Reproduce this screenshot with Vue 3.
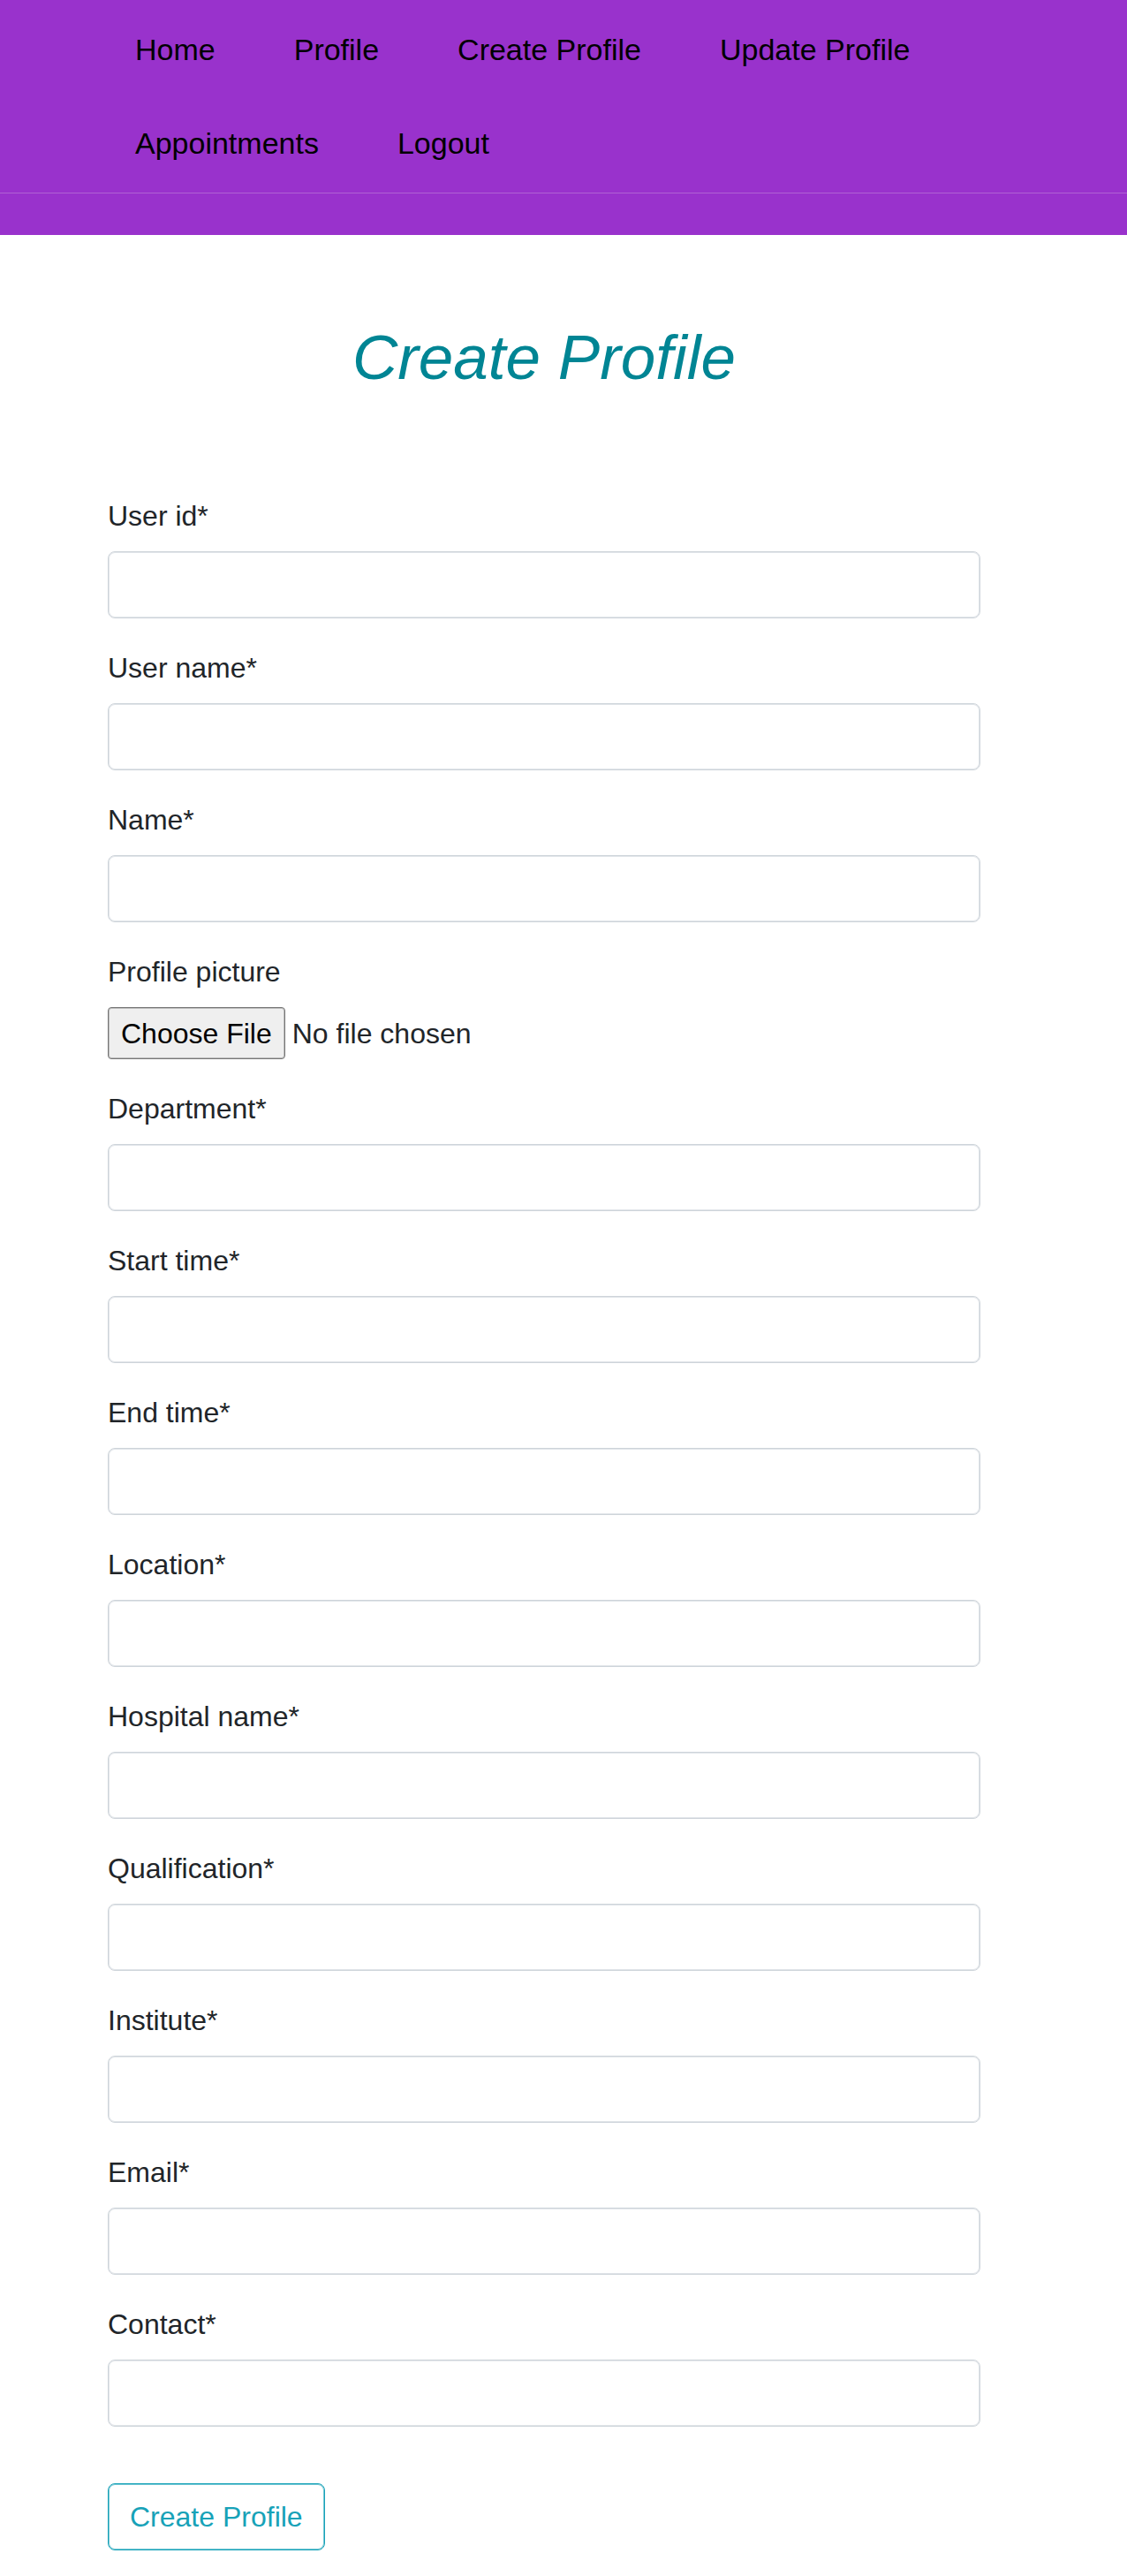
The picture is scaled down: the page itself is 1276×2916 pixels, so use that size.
<script setup>
const links = ['Home', 'Profile', 'Create Profile', 'Update Profile', 'Appointments', 'Logout']

const fields = [
  { id: 'user-id', label: 'User id*' },
  { id: 'user-name', label: 'User name*' },
  { id: 'name', label: 'Name*' },
  { id: 'picture', label: 'Profile picture', type: 'file' },
  { id: 'department', label: 'Department*' },
  { id: 'start-time', label: 'Start time*' },
  { id: 'end-time', label: 'End time*' },
  { id: 'location', label: 'Location*' },
  { id: 'hospital', label: 'Hospital name*' },
  { id: 'qualification', label: 'Qualification*' },
  { id: 'institute', label: 'Institute*' },
  { id: 'email', label: 'Email*' },
  { id: 'contact', label: 'Contact*' }
]
</script>

<template>
  <div class="page">
    <header class="header">
      <nav class="nav">
        <a v-for="link in links" :key="link" class="nav-link" href="#">{{ link }}</a>
      </nav>
    </header>
    <main class="content">
      <h1 class="title">Create Profile</h1>
      <form class="form" @submit.prevent>
        <div v-for="field in fields" :key="field.id" class="field">
          <label class="label" :for="field.id">{{ field.label }}</label>
          <input v-if="field.type === 'file'" :id="field.id" class="file" type="file" />
          <input v-else :id="field.id" class="control" type="text" />
        </div>
        <button class="submit" type="submit">Create Profile</button>
      </form>
    </main>
  </div>
</template>

<style>
body {
  margin: 0;
  background: #fff;
}
</style>

<style scoped>
.page,
.page * {
  box-sizing: border-box;
}

.page {
  font-family: "Liberation Sans", Arial, sans-serif;
  font-size: 32px;
  line-height: 48px;
  color: #212529;
}

.header {
  padding-bottom: 47px;
  background: #9932cc;
}

.nav {
  display: flex;
  flex-wrap: wrap;
  column-gap: 89px;
  padding: 3px 153px;
  border-bottom: 1px solid #b062d4;
}

.nav-link {
  font-size: 34px;
  line-height: 106px;
  color: #000;
  text-decoration: none;
}

.content {
  padding: 96px 166px 30px 122px;
}

.title {
  margin: 0 0 112px;
  font-size: 71px;
  line-height: 86px;
  font-weight: 400;
  font-style: italic;
  text-align: center;
  color: #008594;
}

.form {
  display: flex;
  flex-direction: column;
  gap: 32px;
}

.field {
  display: flex;
  flex-direction: column;
  gap: 16px;
}

.control {
  width: 100%;
  height: 76px;
  padding: 12px 24px;
  border: 1px solid #ced4da;
  border-radius: 8px;
  box-shadow: inset 0 0 0 1px #e1e5e9;
  background: #fff;
  font: inherit;
  color: #495057;
}

.file {
  height: 59px;
  font: inherit;
  line-height: 37px;
  color: inherit;
}

.file::file-selector-button {
  box-sizing: border-box;
  height: 59px;
  margin: 0 8px 0 0;
  padding: 2px 14px 0;
  border: 1px solid #767676;
  border-radius: 4px;
  box-shadow: inset 0 0 0 1px #bbb;
  background: #efefef;
  font: inherit;
  color: #000;
}

.submit {
  align-self: flex-start;
  height: 76px;
  margin-top: 32px;
  padding: 0 24px;
  border: 1px solid #17a2b8;
  border-radius: 8px;
  box-shadow: inset 0 0 0 1px #74c7d4;
  background: transparent;
  font: inherit;
  color: #17a2b8;
}
</style>
